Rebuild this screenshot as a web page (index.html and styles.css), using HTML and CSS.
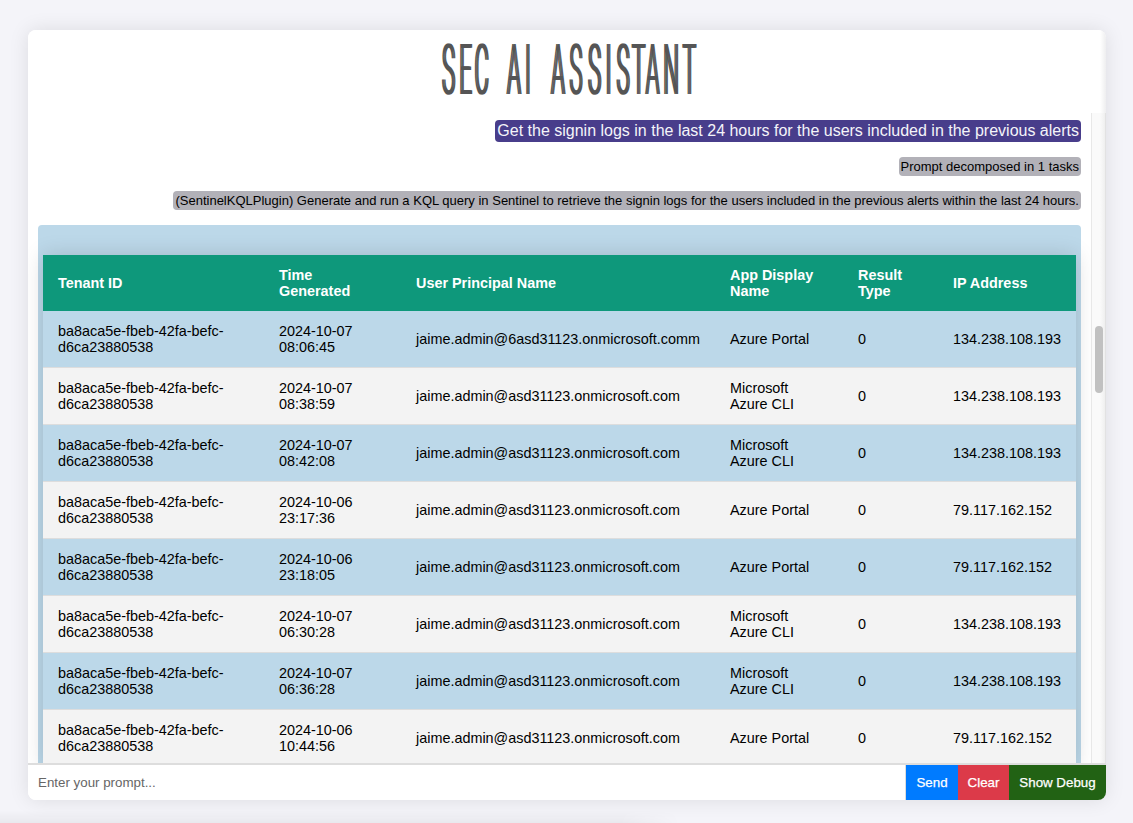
FILE: index.html
```html
<!DOCTYPE html>
<html lang="en">
<head>
<meta charset="utf-8">
<title>SEC AI Assistant</title>
<link rel="stylesheet" href="styles.css">
</head>
<body>
<main class="chat">
  <header class="header">
    <svg class="logo" width="270" height="83" viewBox="434 30 270 83">
      <g transform="scale(.31 1)">
        <text class="logo-text" y="94.5" x="1447 1502 1554 1608 1658 1703 1755 1800 1858 1918 1963 2010 2060 2105 2165 2224">SEC AI ASSISTANT</text>
      </g>
    </svg>
  </header>
  <section class="body">
    <div class="messages">
      <div class="line user"><span class="bubble">Get the signin logs in the last 24 hours for the users included in the previous alerts</span></div>
      <div class="line note"><span class="bubble">Prompt decomposed in 1 tasks</span></div>
      <div class="line note"><span class="bubble">(SentinelKQLPlugin) Generate and run a KQL query in Sentinel to retrieve the signin logs for the users included in the previous alerts within the last 24 hours.</span></div>
      <div class="answer">
        <table class="logs">
          <colgroup><col class="c-tenant"><col class="c-time"><col class="c-user"><col class="c-app"><col class="c-result"><col class="c-ip"></colgroup>
          <thead><tr><th>Tenant ID</th><th>Time<br>Generated</th><th>User Principal Name</th><th>App Display<br>Name</th><th>Result<br>Type</th><th>IP Address</th></tr></thead>
          <tbody>
            <tr><td>ba8aca5e-fbeb-42fa-befc-<br>d6ca23880538</td><td>2024-10-07<br>08:06:45</td><td>jaime.admin@6asd31123.onmicrosoft.comm</td><td>Azure Portal</td><td>0</td><td>134.238.108.193</td></tr>
            <tr><td>ba8aca5e-fbeb-42fa-befc-<br>d6ca23880538</td><td>2024-10-07<br>08:38:59</td><td>jaime.admin@asd31123.onmicrosoft.com</td><td>Microsoft<br>Azure CLI</td><td>0</td><td>134.238.108.193</td></tr>
            <tr><td>ba8aca5e-fbeb-42fa-befc-<br>d6ca23880538</td><td>2024-10-07<br>08:42:08</td><td>jaime.admin@asd31123.onmicrosoft.com</td><td>Microsoft<br>Azure CLI</td><td>0</td><td>134.238.108.193</td></tr>
            <tr><td>ba8aca5e-fbeb-42fa-befc-<br>d6ca23880538</td><td>2024-10-06<br>23:17:36</td><td>jaime.admin@asd31123.onmicrosoft.com</td><td>Azure Portal</td><td>0</td><td>79.117.162.152</td></tr>
            <tr><td>ba8aca5e-fbeb-42fa-befc-<br>d6ca23880538</td><td>2024-10-06<br>23:18:05</td><td>jaime.admin@asd31123.onmicrosoft.com</td><td>Azure Portal</td><td>0</td><td>79.117.162.152</td></tr>
            <tr><td>ba8aca5e-fbeb-42fa-befc-<br>d6ca23880538</td><td>2024-10-07<br>06:30:28</td><td>jaime.admin@asd31123.onmicrosoft.com</td><td>Microsoft<br>Azure CLI</td><td>0</td><td>134.238.108.193</td></tr>
            <tr><td>ba8aca5e-fbeb-42fa-befc-<br>d6ca23880538</td><td>2024-10-07<br>06:36:28</td><td>jaime.admin@asd31123.onmicrosoft.com</td><td>Microsoft<br>Azure CLI</td><td>0</td><td>134.238.108.193</td></tr>
            <tr><td>ba8aca5e-fbeb-42fa-befc-<br>d6ca23880538</td><td>2024-10-06<br>10:44:56</td><td>jaime.admin@asd31123.onmicrosoft.com</td><td>Azure Portal</td><td>0</td><td>79.117.162.152</td></tr>
          </tbody>
        </table>
      </div>
    </div>
    <div class="scrollbar"><div class="thumb"></div></div>
  </section>
  <form class="prompt">
    <input class="prompt-input" type="text" placeholder="Enter your prompt...">
    <button class="btn send" type="button">Send</button>
    <button class="btn clear" type="button">Clear</button>
    <button class="btn debug" type="button">Show Debug</button>
  </form>
</main>
<div class="bottom-shade"></div>
</body>
</html>
```
FILE: styles.css
```css
* { box-sizing: border-box; }
body {
  margin: 0;
  height: 823px;
  padding: 30px 27px 0 28px;
  overflow: hidden;
  background: #f4f4f9;
  font-family: "Liberation Sans", Arial, sans-serif;
}
.chat {
  display: flex;
  flex-direction: column;
  height: 770px;
  overflow: hidden;
  background: #fff;
  border-radius: 8px;
  box-shadow: 0 0 20px rgba(0, 0, 0, .1);
}
.bottom-shade {
  width: 680px;
  height: 13px;
  margin: 10px 0 0 -28px;
  background: linear-gradient(to bottom, transparent, rgba(0, 0, 0, .045));
  -webkit-mask-image: linear-gradient(to left, transparent, #000 60px);
  mask-image: linear-gradient(to left, transparent, #000 60px);
}
.header {
  display: flex;
  justify-content: center;
  flex: none;
  height: 83px;
  padding-left: 4px;
  background: linear-gradient(to left, #eeeeef, #fff 6px);
}
.logo-text {
  font-family: Roboto, sans-serif;
  font-size: 70.5px;
  font-weight: 300;
  fill: #555;
  text-anchor: middle;
  text-shadow: -2.6px 0 #555, 2.6px 0 #555;
}
.body {
  display: flex;
  height: 650px;
  overflow: hidden;
}
.messages {
  flex: 1;
  height: 650px;
  padding: 6px 10px 0;
}
.line { text-align: right; }
.bubble {
  display: inline-block;
  padding: 2px;
  border-radius: 4px;
  white-space: nowrap;
}
.user { height: 37px; }
.user .bubble {
  height: 22px;
  margin-top: 1px;
  line-height: 18px;
  font-size: 16px;
  background: #483d8b;
  color: #f4f4f9;
}
.note { height: 34px; font-size: 13px; }
.note .bubble {
  height: 19px;
  margin-top: 1px;
  line-height: 15px;
  background: #b2b1b8;
  color: #000;
}
.answer {
  height: 700px;
  margin-top: 1px;
  padding: 30px 5px 0;
  border-radius: 4px;
  background: #bcd8e9;
}
.logs {
  width: 1033px;
  table-layout: fixed;
  border-collapse: separate;
  border-spacing: 0;
  font-size: 14.4px;
  line-height: 16px;
  box-shadow: 0 0 20px rgba(0, 0, 0, .15);
}
.c-tenant { width: 221px; }
.c-time { width: 137px; }
.c-user { width: 314px; }
.c-app { width: 128px; }
.c-result { width: 95px; }
.c-ip { width: 138px; }
.logs th, .logs td {
  padding: 12px 0 12px 15px;
  text-align: left;
  vertical-align: middle;
  white-space: nowrap;
}
.logs thead tr { height: 56px; background: #0e987b; color: #fff; }
.logs td { height: 57px; border-bottom: 1px solid #ddd; }
.logs tbody tr:nth-child(even) { background: #f3f3f3; }
.scrollbar {
  flex: none;
  width: 15px;
  padding: 213px 3px 0;
  border-left: 1px solid #e8e8e8;
  background: linear-gradient(to left, #e2e2e2 1px, #efefef 1px, #fafafa 6px);
}
.thumb { width: 8px; height: 67px; border-radius: 4px; background: #c1c1c1; }
.prompt {
  display: flex;
  flex: none;
  height: 37px;
  border-top: 2px solid #ddd;
}
.prompt-input {
  flex: 1;
  min-width: 0;
  padding: 0 10px;
  border: 0;
  border-right: 1px solid #ddd;
  font: 13.33px "Liberation Sans", Arial, sans-serif;
}
.prompt-input::placeholder { color: #666; }
.btn {
  flex: none;
  padding: 0;
  border: 0;
  color: #fff;
  font: 13.33px "Liberation Sans", Arial, sans-serif;
  -webkit-text-stroke: .25px #fff;
}
.send { width: 52px; background: #007bff; }
.clear { width: 51px; background: #dc3a49; }
.debug { width: 97px; background: #226214; }
```
